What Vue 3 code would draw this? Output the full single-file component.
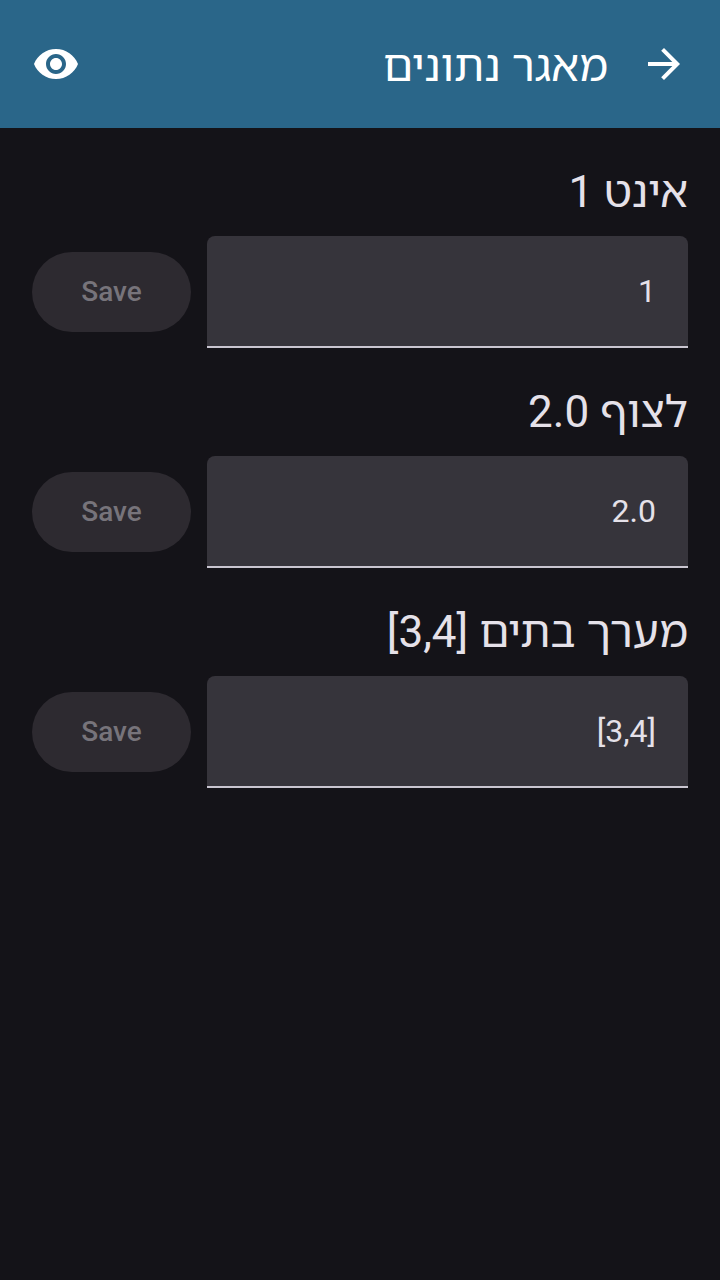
<script setup>
import { ref } from 'vue'

const entries = ref([
  { id: 'int', label: 'אינט 1', value: '1' },
  { id: 'float', label: 'לצוף 2.0', value: '2.0' },
  { id: 'array', label: 'מערך בתים [3,4]', value: '[3,4]' },
])
</script>

<template>
  <div class="screen" dir="rtl" lang="he">
    <header class="bar">
      <button class="icon-button" type="button" aria-label="חזרה">
        <svg viewBox="0 0 24 24" width="48" height="48" aria-hidden="true">
          <path d="M12 4l-1.41 1.41L16.17 11H4v2h12.17l-5.58 5.59L12 20l8-8z" />
        </svg>
      </button>
      <h1 class="title">מאגר נתונים</h1>
      <button class="icon-button" type="button" aria-label="תצוגה">
        <svg viewBox="0 0 24 24" width="48" height="48" aria-hidden="true">
          <path d="M12 4.5C7 4.5 2.73 7.61 1 12c1.73 4.39 6 7.5 11 7.5s9.27-3.11 11-7.5c-1.73-4.39-6-7.5-11-7.5zM12 17c-2.76 0-5-2.24-5-5s2.24-5 5-5 5 2.24 5 5-2.24 5-5 5zm0-8c-1.66 0-3 1.34-3 3s1.34 3 3 3 3-1.34 3-3-1.34-3-3-3z" />
        </svg>
      </button>
    </header>
    <main class="entries">
      <section v-for="entry in entries" :key="entry.id" class="entry">
        <label class="label" :for="entry.id">{{ entry.label }}</label>
        <div class="row">
          <input :id="entry.id" v-model="entry.value" class="field" type="text" />
          <button class="save" type="button" disabled>Save</button>
        </div>
      </section>
    </main>
  </div>
</template>

<style>
body {
  background: #141318;
}
</style>

<style scoped>
.screen {
  min-height: 100vh;
  background: #141318;
  color: #e5e1e9;
  font-family: Roboto, "Noto Sans Hebrew", "Liberation Sans", sans-serif;
}
.bar {
  display: flex;
  align-items: center;
  min-height: 128px;
  box-sizing: border-box;
  padding: 0 32px;
  background: #2a6689;
  color: #fff;
}
.icon-button {
  display: flex;
  padding: 0;
  border: 0;
  background: none;
  color: inherit;
}
.icon-button svg {
  fill: currentColor;
}
.title {
  flex: 1;
  margin: 0 32px;
  padding-top: 4px;
  font-size: 44px;
  font-weight: 400;
  line-height: 56px;
}
.entries {
  display: flex;
  flex-direction: column;
  gap: 32px;
  padding: 32px;
}
.entry {
  display: flex;
  flex-direction: column;
  gap: 12px;
}
.label {
  font-size: 44px;
  line-height: 64px;
}
.row {
  display: flex;
  align-items: center;
  gap: 16px;
}
.field {
  flex: 1;
  min-width: 0;
  height: 112px;
  box-sizing: border-box;
  padding: 0 32px;
  border: 0;
  border-bottom: 2px solid #c9c5d0;
  border-radius: 8px 8px 0 0;
  background: #36343b;
  color: #e5e1e9;
  font: 400 32px/48px Roboto, sans-serif;
  outline: none;
}
.save {
  min-width: 159px;
  height: 80px;
  padding: 0 48px;
  border: 0;
  border-radius: 40px;
  background: #2d2a30;
  color: #77747b;
  font: 500 28px/40px Roboto, sans-serif;
}
</style>
